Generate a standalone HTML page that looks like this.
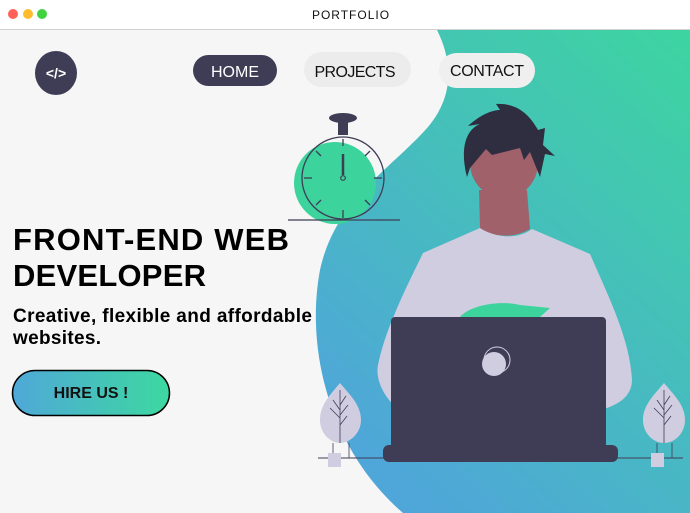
<!DOCTYPE html>
<html><head><meta charset="utf-8"><style>
html,body{margin:0;padding:0;width:690px;height:513px;overflow:hidden;background:#f6f6f6;font-family:"Liberation Sans",sans-serif}
</style></head><body>
<svg width="690" height="513" viewBox="0 0 690 513" xmlns="http://www.w3.org/2000/svg" style="position:absolute;left:0;top:0">
<defs>
<linearGradient id="bg" x1="1" y1="0" x2="0.3" y2="1"><stop offset="0" stop-color="#3dd5a0"/><stop offset="1" stop-color="#4fa6d9"/></linearGradient>
<linearGradient id="btn" x1="0" y1="0" x2="1" y2="0"><stop offset="0" stop-color="#4fa8d8"/><stop offset="1" stop-color="#3dd8a0"/></linearGradient>
</defs>
<rect x="0" y="30" width="690" height="483" fill="#f6f6f6"/>
<path d="M437,30 C452,60 455,95 428,127 C390,170 335,200 320,270 C305,350 330,450 403,513 L690,513 L690,30 Z" fill="url(#bg)"/>
<rect x="0" y="0" width="690" height="29" fill="#fff"/>
<rect x="0" y="29" width="690" height="1" fill="#d0d0d0"/>
<circle cx="13" cy="14" r="5" fill="#ff6159"/><circle cx="28" cy="14" r="5" fill="#ffbd2e"/><circle cx="42" cy="14" r="5" fill="#3fd43f"/>
<text x="351" y="19" text-anchor="middle" font-size="12" letter-spacing="1" fill="#111">PORTFOLIO</text>
<ellipse cx="56" cy="73" rx="21" ry="22" fill="#3f3d56"/>
<text x="56" y="78" text-anchor="middle" font-size="14" font-weight="bold" fill="#fff">&lt;/&gt;</text>
<rect x="193" y="55" width="84" height="31" rx="15.5" fill="#3f3d56"/>
<text x="235" y="77" text-anchor="middle" font-size="16" fill="#fff">HOME</text>
<rect x="304" y="52" width="107" height="35" rx="17.5" fill="#ececec"/>
<text x="355" y="77" text-anchor="middle" font-size="16" fill="#111" textLength="81">PROJECTS</text>
<rect x="439" y="53" width="96" height="35" rx="17.5" fill="#efefef"/>
<text x="487" y="76" text-anchor="middle" font-size="16" fill="#111" textLength="74">CONTACT</text>
<text x="13" y="250" font-size="31" font-weight="bold" fill="#000" textLength="276">FRONT-END WEB</text>
<text x="13" y="286" font-size="31" font-weight="bold" fill="#000" textLength="193">DEVELOPER</text>
<text x="13" y="322" font-size="19" font-weight="bold" fill="#000" textLength="299">Creative, flexible and affordable</text>
<text x="13" y="344" font-size="19" font-weight="bold" fill="#000" textLength="88">websites.</text>
<rect x="12.5" y="370.5" width="157" height="45" rx="22.5" fill="url(#btn)" stroke="#000" stroke-width="1.5"/>
<text x="91" y="398" text-anchor="middle" font-size="16" font-weight="bold" fill="#111">HIRE US !</text>
<circle cx="335" cy="183" r="41" fill="#3cd39c"/>
<circle cx="343" cy="178" r="41" fill="none" stroke="#3f3d56" stroke-width="1.3"/>
<rect x="338" y="120" width="10" height="15" fill="#3f3d56"/>
<ellipse cx="343" cy="118" rx="14" ry="5" fill="#3f3d56"/>
<g stroke="#3f3d56" stroke-width="1.3">
<line x1="343" y1="139" x2="343" y2="146"/><line x1="343" y1="210" x2="343" y2="218"/>
<line x1="304" y1="178" x2="312" y2="178"/><line x1="374" y1="178" x2="382" y2="178"/>
<line x1="316" y1="151" x2="321" y2="156"/><line x1="370" y1="151" x2="365" y2="156"/>
<line x1="316" y1="205" x2="321" y2="200"/><line x1="370" y1="205" x2="365" y2="200"/>
<line x1="288" y1="220" x2="400" y2="220"/>
</g>
<line x1="343" y1="154" x2="343" y2="175" stroke="#3f3d56" stroke-width="2.5"/>
<circle cx="343" cy="178" r="2.3" fill="none" stroke="#3f3d56" stroke-width="1.2"/>
<path d="M480,228 C500,240 520,238 532,229 L590,254 C610,300 630,340 632,380 C632,395 620,405 600,410 L400,410 C385,400 375,380 378,365 C385,330 405,290 423,253 Z" fill="#d0cde1"/>
<path d="M460,317 C470,305 500,300 520,305 L550,308 L540,317 Z" fill="#3cd39c"/>
<path d="M479,190 L480,228 C495,238 515,238 530,229 L527,190 Z" fill="#a0616a"/>
<ellipse cx="504" cy="163" rx="34" ry="35" fill="#a0616a"/>
<path d="M467,177 C460,150 465,130 480,124 L468,126 C480,115 492,110 500,110 L496,104 C515,103 528,112 538,130 L545,128 L543,145 L555,156 L545,154 L540,177 L530,152 L524,160 L520,148 L492,155 L486,149 L470,168 Z" fill="#2f2e41"/>
<rect x="391" y="317" width="215" height="135" rx="4" fill="#3f3d56"/>
<rect x="383" y="445" width="235" height="17" rx="6" fill="#3f3d56"/>
<circle cx="497" cy="360" r="13" fill="none" stroke="#d0cde1" stroke-width="1"/>
<circle cx="494" cy="364" r="12" fill="#d0cde1"/>
<line x1="318" y1="458" x2="683" y2="458" stroke="#3f3d56" stroke-width="1"/>
<path d="M340,383 C330,395 320,405 320,420 C320,433 330,443 340,443 C350,443 361,433 361,420 C361,405 350,395 340,383 Z" fill="#d0cde1"/>
<path d="M340,390 L340,443 M340,410 L333,400 M340,418 L330,408 M340,405 L346,396 M340,415 L348,405 M340,425 L347,416" stroke="#3f3d56" stroke-width="0.8" fill="none"/>
<path d="M333,443 L333,458 M349,443 L349,458" stroke="#3f3d56" stroke-width="0.8"/>
<rect x="328" y="453" width="13" height="14" fill="#d0cde1"/>
<path d="M664,383 C654,395 643,405 643,420 C643,433 653,443 664,443 C675,443 685,433 685,420 C685,405 674,395 664,383 Z" fill="#d0cde1"/>
<path d="M664,390 L664,443 M664,410 L657,400 M664,418 L654,408 M664,405 L670,396 M664,415 L672,405 M664,425 L671,416" stroke="#3f3d56" stroke-width="0.8" fill="none"/>
<path d="M657,443 L657,458 M672,443 L672,458" stroke="#3f3d56" stroke-width="0.8"/>
<rect x="651" y="453" width="13" height="14" fill="#d0cde1"/>
</svg>
</body></html>
